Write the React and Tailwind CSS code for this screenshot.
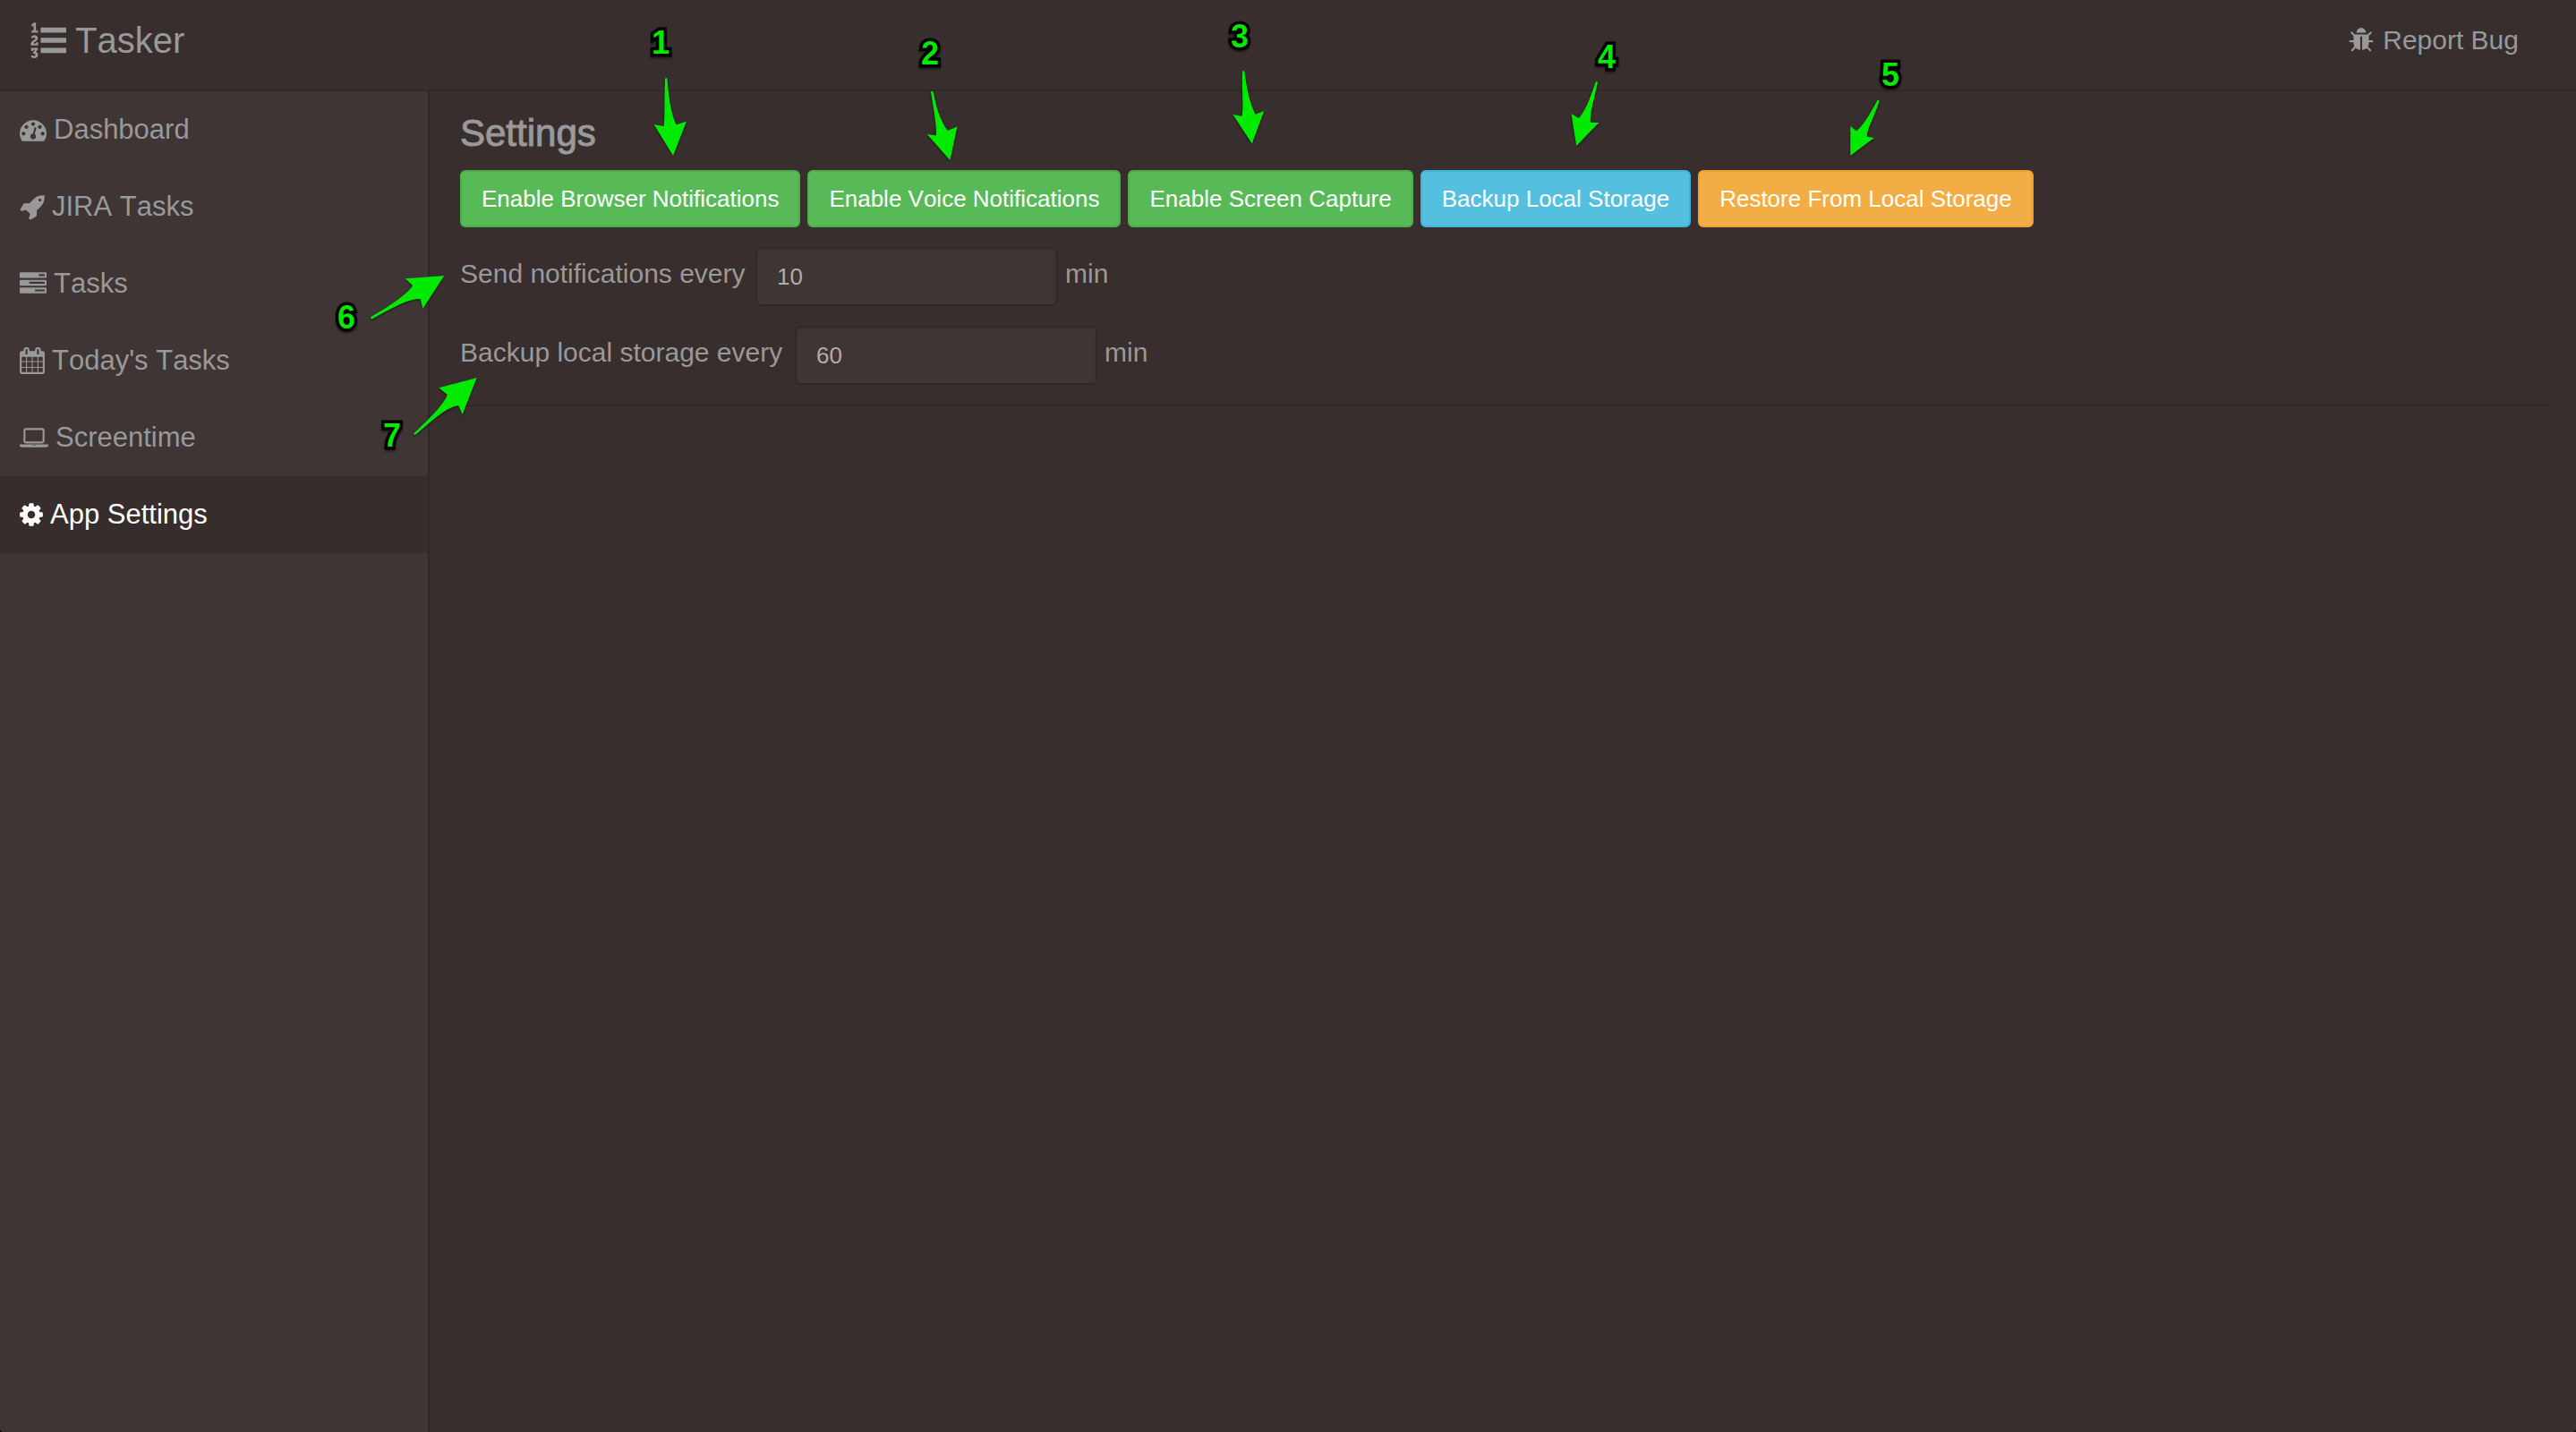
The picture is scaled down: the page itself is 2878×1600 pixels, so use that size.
const ICONS = {
  listOl: {
    box: "0 0 1792 1792",
    d: "M381 1620q0 80-54.5 126t-135.5 46q-106 0-172-66l57-88q49 45 106 45 29 0 50.5-14.5t21.5-42.5q0-64-105-56l-26-56q8-10 32.5-43.5t42.5-54 37-38.5v-1q-16 0-48.5 1t-48.500 1v53h-106v-152h333v88l-95 115q51 12 81 49t30 88zm2-627v159h-362q-6-36-6-54 0-51 23.500-93t56.500-68 66-47.500 56.500-43.500 23.500-45q0-25-14.500-38.500t-39.500-13.500q-46 0-81 58l-85-59q24-51 71.500-79.500t105.500-28.500q73 0 123 41.500t50 112.500q0 50-34 91.500t-75 64.500-75.500 50.500-35.500 52.500h127v-60h105zm1409 319v192q0 13-9.500 22.500t-22.500 9.500h-1216q-13 0-22.500-9.500t-9.500-22.500v-192q0-14 9-23t23-9h1216q13 0 22.500 9.500t9.500 22.500zm-1408-899v99h-335v-99h107q0-41 .5-121.500t.5-121.500v-12h-2q-8 17-50 54l-71-76 136-127h106v404h108zm1408 387v192q0 13-9.500 22.500t-22.500 9.500h-1216q-13 0-22.500-9.500t-9.500-22.500v-192q0-14 9-23t23-9h1216q13 0 22.500 9.500t9.500 22.500zm0-512v192q0 13-9.500 22.500t-22.500 9.500h-1216q-13 0-22.500-9.500t-9.500-22.500v-192q0-13 9.500-22.500t22.500-9.500h1216q13 0 22.500 9.500t9.500 22.500z",
  },
  gauge: {
    box: "0 0 1792 1792",
    d: "M384 1152q0-53-37.500-90.500t-90.500-37.500-90.500 37.500-37.500 90.500 37.500 90.500 90.500 37.500 90.500-37.500 37.500-90.500zm192-448q0-53-37.500-90.500t-90.500-37.500-90.500 37.500-37.500 90.500 37.500 90.500 90.500 37.500 90.500-37.500 37.500-90.500zm428 481l101-382q6-26-7.500-48.500t-38.500-29.500-48 6.500-30 39.500l-101 382q-60 5-107 43.500t-63 98.500q-20 77 20 146t117 89 146-20 89-117q16-60-6-117t-72-91zm660-33q0-53-37.500-90.500t-90.500-37.500-90.500 37.500-37.500 90.500 37.500 90.500 90.500 37.500 90.500-37.500 37.500-90.500zm-640-640q0-53-37.500-90.500t-90.500-37.500-90.500 37.500-37.500 90.500 37.500 90.500 90.500 37.500 90.500-37.500 37.500-90.500zm448 192q0-53-37.500-90.500t-90.500-37.500-90.500 37.500-37.500 90.500 37.500 90.500 90.500 37.500 90.500-37.500 37.500-90.500zm320 448q0 261-141 483-19 29-54 29h-1402q-35 0-54-29-141-221-141-483 0-182 71-348t191-286 286-191 348-71 348 71 286 191 191 286 71 348z",
  },
  rocket: {
    box: "0 0 1664 1792",
    d: "M1440 448q0-40-28-68t-68-28-68 28-28 68 28 68 68 28 68-28 28-68zm224-288q0 249-75.500 430.500t-253.500 360.500q-81 80-195 176l-20 379q-2 16-16 26l-384 224q-7 4-16 4-12 0-23-9l-64-64q-13-14-8-32l85-276-281-281-276 85q-3 1-9 1-14 0-23-9l-64-64q-17-19-5-39l224-384q10-14 26-16l379-20q96-114 176-195 188-187 358-258t431-71q14 0 24 9.500t10 22.500z",
  },
  tasks: {
    box: "0 0 1792 1792",
    d: "M1024 1408h640v-128h-640v128zm-384-512h1024v-128h-1024v128zm640-512h384v-128h-384v128zm512 832v256q0 26-19 45t-45 19h-1664q-26 0-45-19t-19-45v-256q0-26 19-45t45-19h1664q26 0 45 19t19 45zm0-512v256q0 26-19 45t-45 19h-1664q-26 0-45-19t-19-45v-256q0-26 19-45t45-19h1664q26 0 45 19t19 45zm0-512v256q0 26-19 45t-45 19h-1664q-26 0-45-19t-19-45v-256q0-26 19-45t45-19h1664q26 0 45 19t19 45z",
  },
  calendar: {
    box: "64 0 1664 1792",
    d: "M192 1664h288v-288h-288v288zm352 0h320v-288h-320v288zm-352-352h288v-320h-288v320zm352 0h320v-320h-320v320zm-352-384h288v-288h-288v288zm736 736h320v-288h-320v288zm-384-736h320v-288h-320v288zm768 736h288v-288h-288v288zm-384-352h320v-320h-320v320zm-352-864v-288q0-13-9.500-22.500t-22.500-9.500h-64q-13 0-22.500 9.500t-9.500 22.500v288q0 13 9.500 22.500t22.500 9.500h64q13 0 22.500-9.500t9.500-22.500zm736 864h288v-320h-288v320zm-384-384h320v-288h-320v288zm384 0h288v-288h-288v288zm32-480v-288q0-13-9.500-22.500t-22.500-9.500h-64q-13 0-22.500 9.500t-9.500 22.500v288q0 13 9.500 22.500t22.500 9.500h64q13 0 22.500-9.500t9.500-22.500zm384-64v1280q0 52-38 90t-90 38h-1408q-52 0-90-38t-38-90v-1280q0-52 38-90t90-38h128v-96q0-66 47-113t113-47h64q66 0 113 47t47 113v96h384v-96q0-66 47-113t113-47h64q66 0 113 47t47 113v96h128q52 0 90 38t38 90z",
  },
  laptop: {
    box: "0 0 1920 1792",
    d: "M416 1280q-66 0-113-47t-47-113v-704q0-66 47-113t113-47h1088q66 0 113 47t47 113v704q0 66-47 113t-113 47h-1088zm-32-864v704q0 13 9.500 22.500t22.500 9.500h1088q13 0 22.500-9.500t9.500-22.500v-704q0-13-9.500-22.500t-22.500-9.500h-1088q-13 0-22.500 9.500t-9.500 22.500zm1376 928h160v96q0 40-47 68t-113 28h-1600q-66 0-113-28t-47-68v-96h1760zm-720 96q16 0 16-16t-16-16h-160q-16 0-16 16t16 16h160z",
  },
  cog: {
    box: "128 0 1536 1792",
    d: "M1152 896q0-106-75-181t-181-75-181 75-75 181 75 181 181 75 181-75 75-181zm512-109v222q0 12-8 23t-20 13l-185 28q-19 54-39 91 35 50 107 138 10 12 10 25t-9 23q-27 37-99 108t-94 71q-12 0-26-9l-138-108q-44 23-91 38-16 136-29 186-7 28-36 28h-222q-14 0-24.500-8.500t-11.500-21.500l-28-184q-49-16-90-37l-141 107q-10 9-25 9-14 0-25-11-126-114-165-168-7-10-7-23 0-12 8-23 15-21 51-66.500t54-70.500q-27-50-41-99l-183-27q-13-2-21-12.500t-8-23.500v-222q0-12 8-23t19-13l186-28q14-46 39-92-40-57-107-138-10-12-10-24 0-10 9-23 26-36 98.500-107.500t94.500-71.500q13 0 26 10l138 107q44-23 91-38 16-136 29-186 7-28 36-28h222q14 0 24.500 8.500t11.500 21.500l28 184q49 16 90 37l142-107q9-9 24-9 13 0 25 10 129 119 165 170 7 8 7 22 0 12-8 23-15 21-51 66.500t-54 70.500q26 50 41 98l183 28q13 2 21 12.500t8 23.500z",
  },
  bug: {
    box: "64 0 1664 1792",
    d: "M1696 960q0 26-19 45t-45 19h-224q0 171-67 290l208 209q19 19 19 45t-19 45q-18 19-45 19t-45-19l-198-197q-5 5-15 13t-42 28.500-65 36.500-82 29-97 13v-896h-128v896q-51 0-101.500-13.500t-87-33-66-39-43.500-32.500l-15-14-183 207q-20 21-48 21-24 0-43-16-19-18-20.500-44.500t15.500-46.500l202-227q-58-114-58-274h-224q-26 0-45-19t-19-45 19-45 45-19h224v-294l-173-173q-19-19-19-45t19-45 45-19 45 19l173 173h844l173-173q19-19 45-19t45 19 19 45-19 45l-173 173v294h224q26 0 45 19t19 45zm-480-576h-640q0-133 93.500-226.500t226.500-93.500 226.500 93.500 93.500 226.500z",
  },
};

function Icon({ name, className }) {
  const icon = ICONS[name];
  return (
    <svg viewBox={icon.box} className={`shrink-0 ${className}`} fill="currentColor" aria-hidden="true">
      <path d={icon.d} />
    </svg>
  );
}

const NAV = [
  { label: "Dashboard", icon: "gauge", size: "h-[30px] w-[30px]" },
  { label: "JIRA Tasks", icon: "rocket", size: "h-[30px] w-[28px]" },
  { label: "Tasks", icon: "tasks", size: "h-[30px] w-[30px]" },
  { label: "Today's Tasks", icon: "calendar", size: "h-[30px] w-[28px]" },
  { label: "Screentime", icon: "laptop", size: "h-[30px] w-[32px]" },
  { label: "App Settings", icon: "cog", size: "h-[30px] w-[26px]", active: true },
];

const GREEN = "bg-[#58b957] border-[#4cae4c]";
const ACTIONS = [
  { label: "Enable Browser Notifications", color: GREEN },
  { label: "Enable Voice Notifications", color: GREEN },
  { label: "Enable Screen Capture", color: GREEN },
  { label: "Backup Local Storage", color: "bg-[#55bfe0] border-[#3db5da]" },
  { label: "Restore From Local Storage", color: "bg-[#f2ad44] border-[#f0a12d]" },
];

const INTERVALS = [
  { id: "notify", label: "Send notifications every", value: "10", width: "w-[322px]" },
  { id: "backup", label: "Backup local storage every", value: "60", width: "w-[366px]" },
];

/* Numbered callouts that float over the page; arrows share page coordinates. */
const CALLOUTS = [
  { n: 1, at: "left-[728px] top-[30px]", arrow: "left-[725px] top-[80px] w-[50px] h-[100px]", box: "725 80 50 100",
    d: "M743 88Q744 86 745.500 88C747 108 749 125 755.500 139.500L767 135.500L752 174L730.500 139L741.500 141C743 135 742 110 743 88Z" },
  { n: 2, at: "left-[1029px] top-[42px]", arrow: "left-[1030px] top-[95px] w-[50px] h-[90px]", box: "1030 95 50 90",
    d: "M1040 103Q1040.500 101 1042.500 102C1046 120 1050 134 1058.700 146L1069.400 141.500L1061.400 179L1035.700 150L1046 151.500C1047 144 1043 120 1040 103Z" },
  { n: 3, at: "left-[1375px] top-[23px]", arrow: "left-[1370px] top-[72px] w-[50px] h-[95px]", box: "1370 72 50 95",
    d: "M1388 80Q1389 78 1390.400 80C1393 99 1396 115 1402.600 127.700L1412.200 124L1398.800 160.500L1377.400 128L1387.300 129.700C1390 122 1387 98 1388 80Z" },
  { n: 4, at: "left-[1785px] top-[46px]", arrow: "left-[1750px] top-[84px] w-[50px] h-[86px]", box: "1750 84 50 86",
    d: "M1782.500 92Q1784 90 1785 92C1780 115 1776 128 1777 137L1786.500 137L1761.200 163L1755.500 127L1763.700 132C1770 126 1776 112 1782.500 92Z" },
  { n: 5, at: "left-[2102px] top-[66px]", arrow: "left-[2060px] top-[105px] w-[50px] h-[76px]", box: "2060 105 50 76",
    d: "M2097.500 112Q2099.500 110.500 2099.500 113.500C2093 133 2086 144 2085.700 152.700L2093.900 154L2067.300 174L2067.300 140.700L2073.900 146.500C2080 142 2088 130 2097.500 112Z" },
  { n: 6, at: "left-[377px] top-[337px]", arrow: "left-[408px] top-[300px] w-[96px] h-[64px]", box: "408 300 96 64",
    d: "M414.500 354Q413.500 357 416.500 356C442 342 456 334 469.700 334L472.300 345L496.300 308L452.700 311.300L461 319C457 327 437 341 414.500 354Z" },
  { n: 7, at: "left-[428px] top-[469px]", arrow: "left-[455px] top-[415px] w-[85px] h-[78px]", box: "455 415 85 78",
    d: "M462.500 484Q461.500 486.500 464.500 485.500C484 469 497 456 512 453L516.700 463L532.700 422L490.300 433.300L499.700 441C497 450 482 466 462.500 484Z" },
];

function Callout({ n, at, arrow, box, d }) {
  return (
    <>
      <span
        className={`pointer-events-none absolute text-[36px] leading-[36px] font-bold text-[#00ea00] [-webkit-text-stroke:7px_#000] [paint-order:stroke_fill] drop-shadow-[0_2px_1px_rgba(0,0,0,0.4)] ${at}`}
      >
        {n}
      </span>
      <svg
        viewBox={box}
        className={`pointer-events-none absolute drop-shadow-[0_1px_1px_rgba(0,0,0,0.6)] ${arrow}`}
        fill="#00ea00"
        aria-hidden="true"
      >
        <path d={d} />
      </svg>
    </>
  );
}

export default function App() {
  return (
    <div className="bg-black">
      <div className="relative flex min-h-screen flex-col overflow-hidden rounded-b-[4px] bg-[#372e2d] font-['Liberation_Sans',Arial,sans-serif] text-[30px] text-[#999] [font-kerning:none]">
        <header className="flex h-[102px] items-center justify-between border-b-2 border-[#312827] pr-16 pb-[10px] pl-[34px]">
          <a href="#home" className="flex items-center gap-[10px] text-[40px] leading-[46px]">
            <Icon name="listOl" className="h-[40px] w-[40px]" />
            Tasker
          </a>
          <a href="#report" className="flex items-center gap-[10px] leading-[34px]">
            <Icon name="bug" className="h-[30px] w-[28px]" />
            Report Bug
          </a>
        </header>

        <div className="flex flex-1">
          <nav className="w-[480px] shrink-0 border-r-2 border-[#302827] bg-[#3e3534] text-[31px]">
            <ul>
              {NAV.map((item) => (
                <li key={item.label}>
                  <a
                    href="#nav"
                    aria-current={item.active ? "page" : undefined}
                    className={`flex h-[86px] items-center gap-2 pl-[22px] ${
                      item.active ? "bg-[#362d2c] text-white" : ""
                    }`}
                  >
                    <Icon name={item.icon} className={item.size} />
                    {item.label}
                  </a>
                </li>
              ))}
            </ul>
          </nav>

          <main className="min-w-0 flex-1 pt-6 pr-[30px] pl-[34px]">
            <h1 className="mb-[18px] text-[42px] leading-[46px] [-webkit-text-stroke:1px]">Settings</h1>

            <div className="flex flex-wrap gap-2">
              {ACTIONS.map((action) => (
                <button
                  key={action.label}
                  type="button"
                  className={`h-[64px] rounded-[6px] border-2 px-[22px] text-[26px] leading-[36px] text-white ${action.color}`}
                >
                  {action.label}
                </button>
              ))}
            </div>

            <form className="mt-[22px] flex flex-col gap-[22px] border-b-2 border-[#312827] pb-[22px]">
              {INTERVALS.map((row) => (
                <div key={row.id} className="flex items-start gap-2 leading-[60px]">
                  <label htmlFor={row.id} className={`whitespace-nowrap ${row.width}`}>
                    {row.label}
                  </label>
                  <input
                    id={row.id}
                    type="text"
                    defaultValue={row.value}
                    className="h-[66px] w-[338px] rounded-[6px] border-2 border-[#312827] bg-[#3e3534] px-[22px] text-[26px] text-[#b0acab] shadow-[inset_0_2px_2px_rgba(0,0,0,0.08)]"
                  />
                  <span>min</span>
                </div>
              ))}
            </form>
          </main>
        </div>

        {CALLOUTS.map((c) => (
          <Callout key={c.n} {...c} />
        ))}
      </div>
    </div>
  );
}
